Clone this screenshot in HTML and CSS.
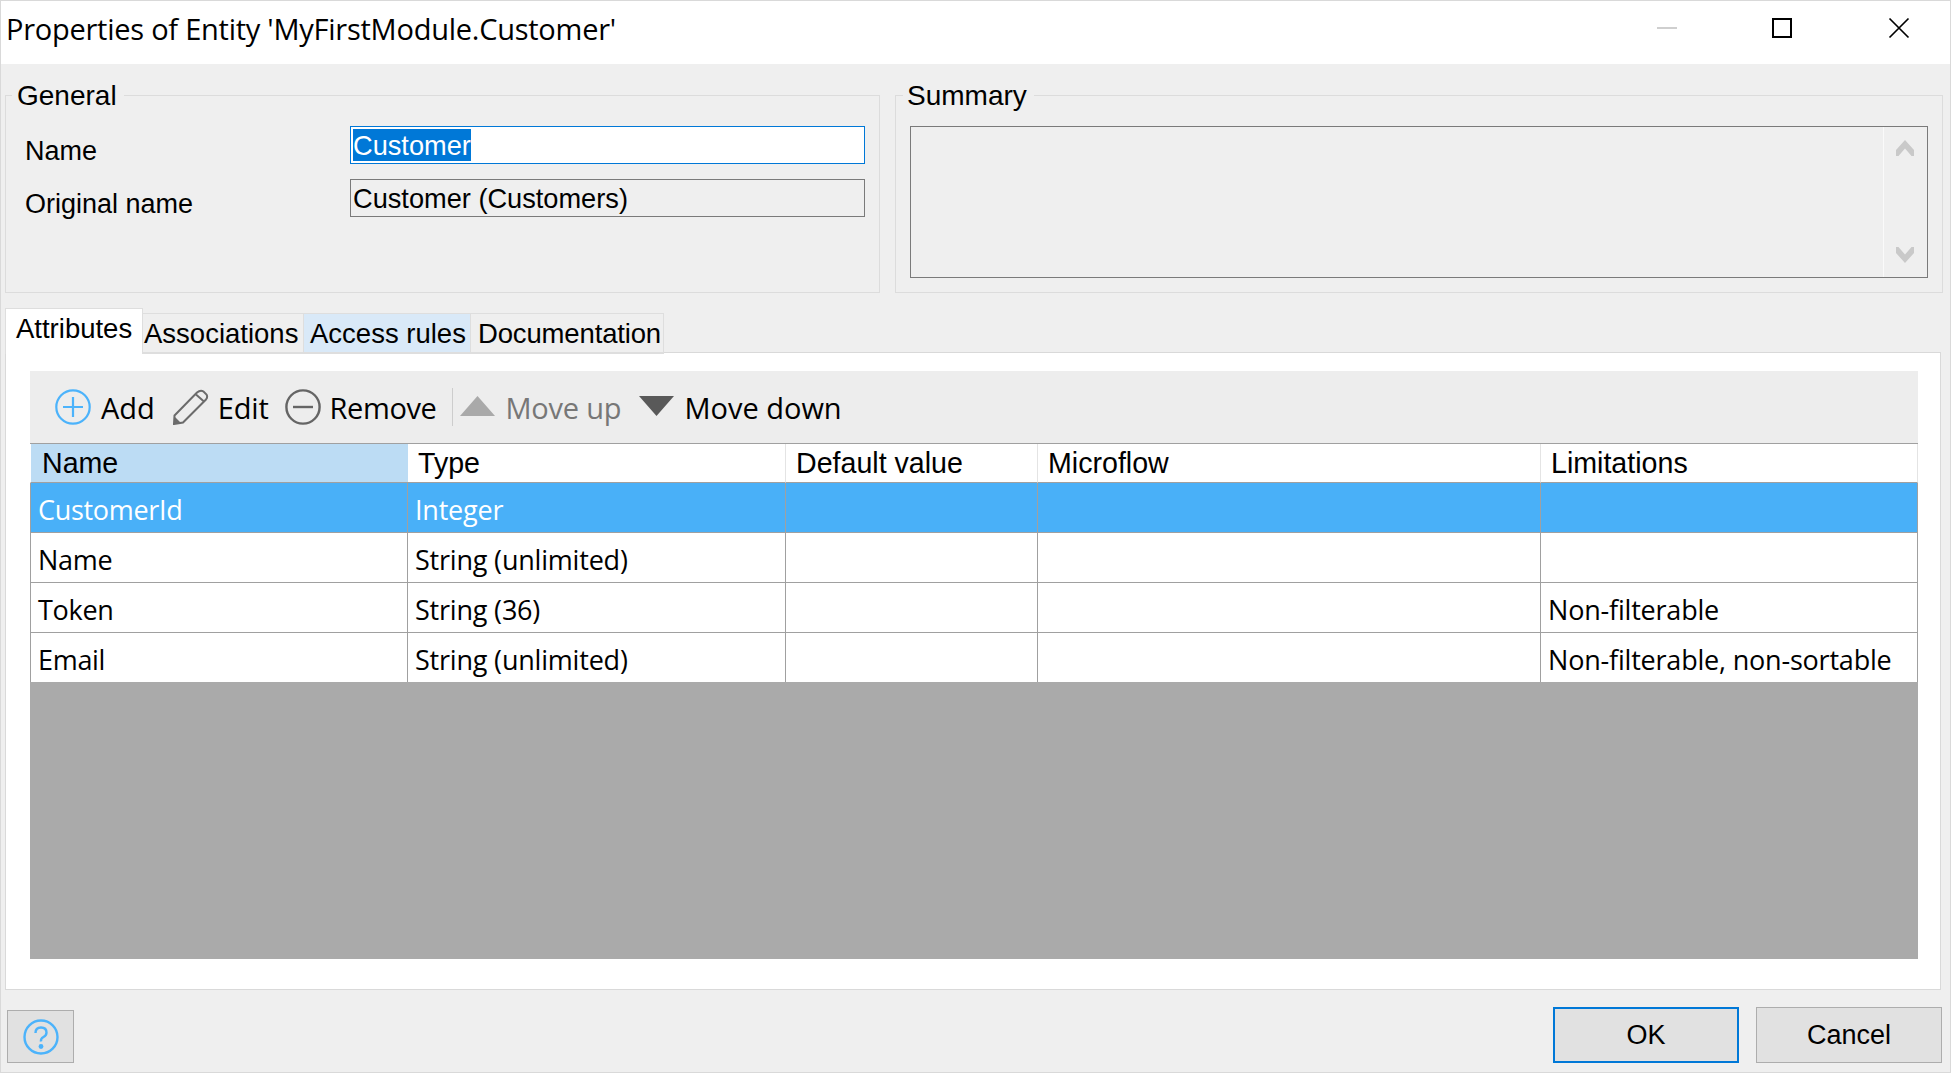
FILE: index.html
```html
<!DOCTYPE html>
<html lang="en">
<head>
<meta charset="utf-8">
<title>Properties of Entity</title>
<link rel="stylesheet" href="styles.css">
</head>
<body>
<div class="window">
  <header class="titlebar">
    <span class="title">Properties of Entity 'MyFirstModule.Customer'</span>
    <div class="controls">
      <svg class="ctl ctl-min" width="20" height="2" viewBox="0 0 20 2"><rect width="20" height="2" fill="#cfcfcf"/></svg>
      <svg class="ctl ctl-max" width="20" height="20" viewBox="0 0 20 20"><rect x="1" y="1" width="18" height="18" fill="none" stroke="#000" stroke-width="2"/></svg>
      <svg class="ctl ctl-close" width="22" height="22" viewBox="0 0 22 22"><path d="M1.5 1.5 20.5 20.5M20.5 1.5 1.5 20.5" fill="none" stroke="#000" stroke-width="1.7"/></svg>
    </div>
  </header>
  <main class="body">
    <div class="top">
      <fieldset class="group group-general">
        <legend>General</legend>
        <div class="form-row"><label class="lbl">Name</label><div class="input input-active"><span class="sel">Customer</span></div></div>
        <div class="form-row form-row-2"><label class="lbl">Original name</label><div class="input input-ro">Customer (Customers)</div></div>
      </fieldset>
      <fieldset class="group group-summary">
        <legend>Summary</legend>
        <div class="summary">
          <div class="scroll">
            <svg width="18" height="16" viewBox="0 0 18 16"><path d="M9 0 18 10V16H15.500L9 8.500 2.500 16H0V10Z" fill="#c9c9c9"/></svg>
            <svg width="18" height="16" viewBox="0 0 18 16"><path d="M9 16 0 6V0H2.500L9 7.500 15.500 0H18V6Z" fill="#c9c9c9"/></svg>
          </div>
        </div>
      </fieldset>
    </div>
    <nav class="tabs">
      <div class="tab tab-active">Attributes</div>
      <div class="tab tab-assoc">Associations</div>
      <div class="tab tab-access">Access rules</div>
      <div class="tab tab-doc">Documentation</div>
    </nav>
    <section class="panel">
      <div class="toolbar">
        <div class="tool tool-add">
          <svg width="36" height="36" viewBox="0 0 36 36"><circle cx="18" cy="18" r="16.7" fill="none" stroke="#4cb3fb" stroke-width="2.2"/><path d="M18 8V28M8 18H28" stroke="#4cb3fb" stroke-width="2.2" fill="none"/></svg>
          <span>Add</span>
        </div>
        <div class="tool tool-edit">
          <svg width="36" height="36" viewBox="0 0 36 36"><path d="M1.500 26.500 24 3.500Q27.500 0.500 30.500 2.500L33.500 5.500Q35 8 33 10.500L10 33.500 1 35Z M23 5.500 31.500 13" fill="none" stroke="#6b6b6b" stroke-width="2"/><path d="M1 35 2 28 8 34Z" fill="#6b6b6b"/></svg>
          <span>Edit</span>
        </div>
        <div class="tool tool-remove">
          <svg width="36" height="36" viewBox="0 0 36 36"><circle cx="18" cy="18" r="16.600" fill="none" stroke="#656565" stroke-width="2.400"/><path d="M8 18H28" stroke="#656565" stroke-width="2.400" fill="none"/></svg>
          <span>Remove</span>
        </div>
        <div class="sep"></div>
        <div class="tool tool-up is-disabled">
          <svg width="35" height="20" viewBox="0 0 35 20"><path d="M17.500 0 35 20H0Z" fill="#a9a9a9"/></svg>
          <span>Move up</span>
        </div>
        <div class="tool tool-down">
          <svg width="35" height="20" viewBox="0 0 35 20"><path d="M0 0H35L17.500 20Z" fill="#595959"/></svg>
          <span>Move down</span>
        </div>
      </div>
      <div class="grid-wrap">
        <table class="grid">
          <colgroup><col class="c1"><col class="c2"><col class="c3"><col class="c4"><col class="c5"></colgroup>
          <thead>
            <tr><th class="sorted">Name</th><th>Type</th><th>Default value</th><th>Microflow</th><th>Limitations</th></tr>
          </thead>
          <tbody>
            <tr class="selected"><td>CustomerId</td><td>Integer</td><td></td><td></td><td></td></tr>
            <tr><td>Name</td><td>String (unlimited)</td><td></td><td></td><td></td></tr>
            <tr><td>Token</td><td>String (36)</td><td></td><td></td><td>Non-filterable</td></tr>
            <tr><td>Email</td><td>String (unlimited)</td><td></td><td></td><td>Non-filterable, non-sortable</td></tr>
          </tbody>
        </table>
        <div class="grid-empty"></div>
      </div>
    </section>
    <footer class="footer">
      <button class="btn btn-help" type="button" aria-label="Help">
        <svg width="36" height="36" viewBox="0 0 36 36"><circle cx="18" cy="18" r="16.500" fill="none" stroke="#4cb3fb" stroke-width="2.400"/><path d="M12.500 14Q12.500 8.500 18 8.500T23.500 13.500Q23.500 16.500 20.500 18T18 22.500" fill="none" stroke="#4cb3fb" stroke-width="2.400"/><circle cx="18" cy="27.500" r="2.400" fill="#4cb3fb"/></svg>
      </button>
      <div class="footer-right">
        <button class="btn btn-ok" type="button">OK</button>
        <button class="btn btn-cancel" type="button">Cancel</button>
      </div>
    </footer>
  </main>
</div>
</body>
</html>
```
FILE: styles.css
```css
* { box-sizing: border-box; }
html, body { margin: 0; height: 100%; }
body { font-family: "Liberation Sans", Arial, sans-serif; font-size: 27px; color: #000; background: #efefef; overflow: hidden; }

.window { width: 1951px; height: 1073px; display: flex; flex-direction: column; border: 1px solid #d9d9d9; }

.titlebar { height: 63px; background: #fff; display: flex; align-items: center; justify-content: space-between; flex: none; }
.title { font-family: "Open Sans", "Noto Sans", sans-serif; font-size: 29px; letter-spacing: -0.25px; margin-left: 5px; position: relative; top: -4px; }
.controls { display: flex; align-items: center; padding-bottom: 9px; }
.ctl { display: block; }
.ctl-min { margin-right: 95px; }
.ctl-max { margin-right: 96px; }
.ctl-close { margin-right: 40px; }

.body { flex: 1; display: flex; flex-direction: column; background: #efefef; min-height: 0; }

.top { display: flex; height: 215px; padding: 0 7px 0 4px; gap: 15px; margin-top: 14px; flex: none; }
.group { margin: 0; padding: 0; border: 1px solid #dcdcdc; min-width: 0; height: 215px; }
.group legend { font-size: 28px; line-height: 36px; padding: 0 7px 0 5px; margin-left: 6px; height: 34px; }
.group-general { width: 875px; }
.group-summary { flex: 1; }
.group-summary legend { margin-left: 7px; padding-left: 4px; }

.form-row { display: flex; align-items: flex-start; padding-left: 19px; margin-top: 14px; }
.form-row-2 { margin-top: 11px; }
.lbl { width: 325px; line-height: 34px; padding-top: 8px; }
.input { width: 515px; height: 38px; font-size: 27.200px; line-height: 32px; padding: 3px 2px 0; white-space: nowrap; border: 1px solid #7a7a7a; }
.input-active { background: #fff; border-color: #0078d7; padding-top: 2px; }
.sel { display: inline-block; background: #0078d7; color: #fff; height: 32px; padding-top: 1px; line-height: 32px; }

.summary { margin: 14px 14px 0; height: 152px; border: 1px solid #7a7a7a; display: flex; justify-content: flex-end; }
.scroll { width: 44px; padding: 13px 1px 14px 0; border-left: 1px solid #fafafa; display: flex; flex-direction: column; align-items: center; justify-content: space-between; }
.scroll svg { display: block; }

.tabs { display: flex; align-items: flex-end; height: 46px; margin-top: 15px; padding-left: 4px; flex: none; margin-bottom: -2px; position: relative; z-index: 1; font-size: 27.500px; }
.tab { height: 41px; line-height: 40px; background: #efefef; border: 1px solid #dedede; border-left: 0; border-bottom-width: 2px; text-align: left; white-space: nowrap; }
.tab-active { width: 138px; height: 46px; background: #fff; border-left: 1px solid #dedede; border-bottom: 0; line-height: 39px; padding-left: 10px; }
.tab-assoc { width: 161px; padding-left: 1px; }
.tab-access { width: 167px; background: #d9e9f8; padding-left: 6px; }
.tab-doc { width: 193px; padding-left: 7px; letter-spacing: -0.15px; }

.panel { height: 638px; margin: 0 9px 0 4px; background: #fff; border: 1px solid #d9d9d9; padding: 18px 22px 30px 24px; flex: none; display: flex; flex-direction: column; }

.toolbar { height: 72px; background: #ededed; display: flex; align-items: center; padding-left: 25px; flex: none; font-family: "Open Sans", "Noto Sans", sans-serif; font-size: 29px; }
.tool { display: flex; align-items: center; white-space: nowrap; }
.tool svg { display: block; flex: none; }
.tool-add span { margin-left: 10px; }
.tool-edit { margin-left: 18px; }
.tool-edit span { margin-left: 9px; letter-spacing: -0.2px; }
.tool-remove { margin-left: 16px; }
.tool-remove span { margin-left: 9px; letter-spacing: -0.4px; }
.sep { width: 1px; height: 38px; background: #cdcdcd; margin-left: 16px; }
.tool-up { margin-left: 7px; }
.tool-up span { margin-left: 10px; color: #777; letter-spacing: -0.2px; }
.tool-down { margin-left: 18px; }
.tool-down span { margin-left: 10px; }
.tool-down svg { margin-top: -2px; }
.tool-up svg { margin-top: -2px; }

.grid-wrap { flex: 1; display: flex; flex-direction: column; border-top: 1px solid #a0a0a0; min-height: 0; }
.grid { width: 100%; border-collapse: separate; border-spacing: 0; table-layout: fixed; flex: none; background: #fff; }
.c1 { width: 378px; }
.c2 { width: 378px; }
.c3 { width: 252px; }
.c4 { width: 503px; }
.c5 { width: auto; }
.grid th { height: 39px; font-size: 28.600px; font-weight: 400; text-align: left; padding: 0 0 0 10px; border-bottom: 1px solid #a0a0a0; border-right: 1px solid #e4e4e4; line-height: 34px; }
.grid th.sorted { background: #bcdcf4; border-right: 0; padding-left: 11px; border-left: 1px solid #fff; }
.grid td { height: 50px; font-family: "Open Sans", "Noto Sans", sans-serif; letter-spacing: -0.2px; padding: 4px 0 0 7px; border-bottom: 1px solid #a0a0a0; border-right: 1px solid #a0a0a0; line-height: 34px; }
.grid td:first-child { border-left: 1px solid #a0a0a0; padding-left: 7px; letter-spacing: -0.3px; }
.grid tr:last-child td { border-bottom: 0; height: 49px; }
.grid tr.selected td { background: #49b0f8; color: #fff; }
.grid-empty { flex: 1; background: #aaa; }

.footer { flex: 1; display: flex; justify-content: space-between; align-items: flex-end; padding: 0 8px 9px 6px; }
.footer-right { display: flex; gap: 17px; }
.btn { font-family: "Liberation Sans", Arial, sans-serif; font-size: 27px; background: #e1e1e1; border: 1px solid #adadad; padding: 0; color: #000; }
.btn-help { width: 67px; height: 53px; display: flex; align-items: center; justify-content: center; }
.btn-ok { width: 186px; height: 56px; border: 2px solid #0078d7; }
.btn-cancel { width: 186px; height: 56px; }
```
